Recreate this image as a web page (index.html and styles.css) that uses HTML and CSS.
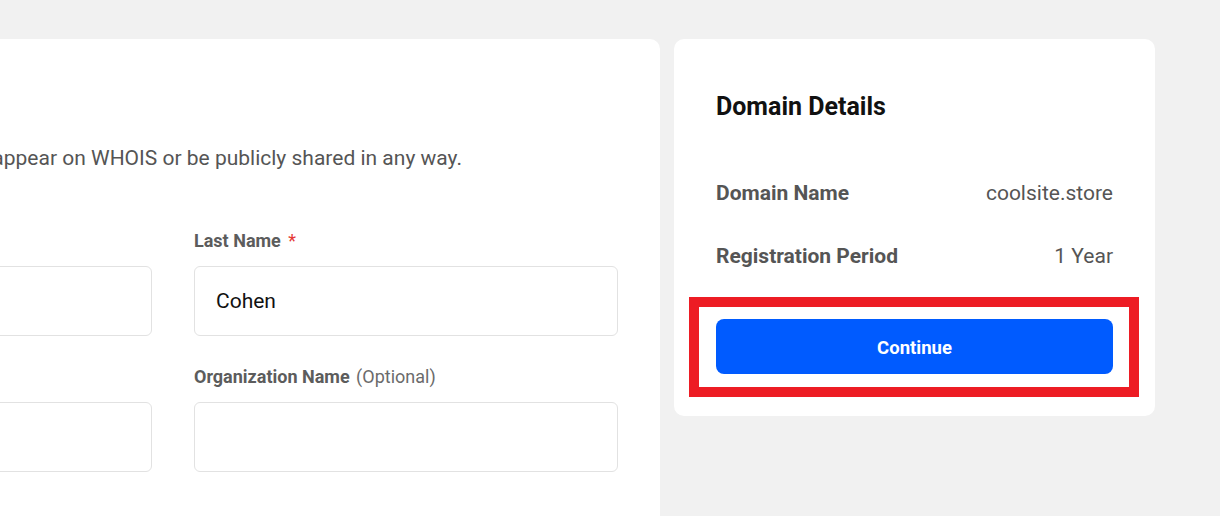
FILE: index.html
```html
<!DOCTYPE html>
<html lang="en">
<head>
<meta charset="utf-8">
<title>Domain Registration</title>
<link rel="stylesheet" href="styles.css">
</head>
<body>
<div class="page">
  <section class="card form-card">
    <h2 class="card-title">Contact Information</h2>
    <p class="intro">The information will still not appear on WHOIS or be publicly shared in any way.</p>
    <div class="grid">
      <div class="field">
        <label class="label">First Name <span class="req">*</span></label>
        <input class="input" type="text" value="Dana">
      </div>
      <div class="field">
        <label class="label">Last Name <span class="req">*</span></label>
        <input class="input" type="text" value="Cohen">
      </div>
      <div class="field">
        <label class="label">Phone Number</label>
        <input class="input" type="text" value="">
      </div>
      <div class="field">
        <label class="label">Organization Name <span class="opt">(Optional)</span></label>
        <input class="input" type="text" value="">
      </div>
    </div>
  </section>
  <aside class="card summary-card">
    <h2 class="card-title">Domain Details</h2>
    <div class="rows">
      <div class="row"><span class="row-key">Domain Name</span><span class="row-val">coolsite.store</span></div>
      <div class="row"><span class="row-key">Registration Period</span><span class="row-val">1 Year</span></div>
    </div>
    <button class="btn-primary" type="button">Continue</button>
    <div class="highlight"></div>
  </aside>
</div>
</body>
</html>
```
FILE: styles.css
```css
* { box-sizing: border-box; }
html, body {
  margin: 0;
  padding: 0;
  height: 100%;
  overflow: hidden;
  background: #f1f1f1;
  font-family: Roboto, "Liberation Sans", Arial, sans-serif;
}
.page {
  display: flex;
  align-items: flex-start;
  gap: 14px;
  margin-left: -314px;
  padding-top: 39px;
}
.card {
  background: #ffffff;
  border-radius: 10px;
  padding: 53px 42px 42px;
}
.form-card {
  flex: 0 0 974px;
  min-height: 620px;
}
.summary-card {
  flex: 0 0 481px;
  position: relative;
}
.card-title {
  margin: 0;
  font-size: 25px;
  line-height: 30px;
  font-weight: 700;
  color: #111111;
}
.intro {
  margin: 24px 0 0;
  font-size: 21px;
  line-height: 24px;
  color: #555555;
}
.grid {
  margin-top: 60px;
  display: grid;
  grid-template-columns: 424px 424px;
  column-gap: 42px;
  row-gap: 30px;
}
.field {
  display: flex;
  flex-direction: column;
}
.label {
  font-size: 18px;
  line-height: 22px;
  font-weight: 700;
  color: #5c5c5c;
  margin-bottom: 14px;
}
.req {
  color: #e53935;
  font-weight: 400;
  margin-left: 3px;
}
.opt {
  font-weight: 400;
  color: #6b6b6b;
  margin-left: 2px;
}
.input {
  height: 70px;
  border: 1px solid #e2e2e2;
  border-radius: 6px;
  padding: 0 21px;
  font-family: Roboto, "Liberation Sans", Arial, sans-serif;
  font-size: 21px;
  color: #111111;
  background: #ffffff;
  outline: none;
}
.rows {
  margin-top: 59px;
  display: flex;
  flex-direction: column;
  gap: 39px;
}
.row {
  display: flex;
  justify-content: space-between;
  font-size: 21px;
  line-height: 24px;
  color: #555555;
}
.row-key { font-weight: 700; color: #555555; }
.row-val { font-weight: 400; }
.btn-primary {
  display: block;
  width: 100%;
  height: 55px;
  margin-top: 51px;
  padding: 2px 0 0;
  border: none;
  border-radius: 8px;
  background: #005bff;
  color: #ffffff;
  font-family: Roboto, "Liberation Sans", Arial, sans-serif;
  font-size: 18.5px;
  font-weight: 700;
  cursor: pointer;
}
.highlight {
  position: absolute;
  left: 15px;
  top: 258px;
  width: 450px;
  height: 100px;
  border: 10px solid #ed1c24;
  pointer-events: none;
}
```
